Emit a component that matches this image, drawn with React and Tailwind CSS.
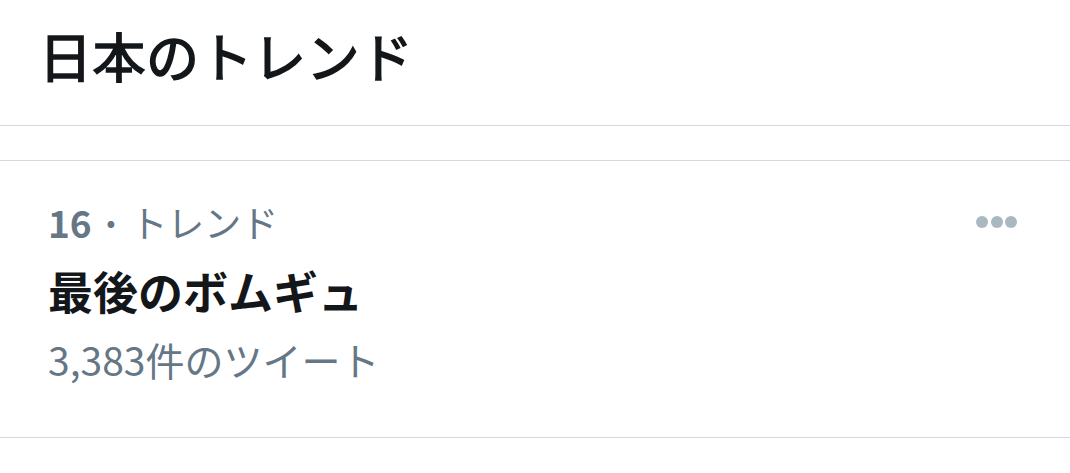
const font = { fontFamily: '"Noto Sans CJK JP", "Noto Sans", sans-serif' };

const MoreDots = () => (
  <div className="flex items-center gap-[2.5px]">
    <span className="block w-[12px] h-[12px] rounded-full bg-[#aab8c2]" />
    <span className="block w-[12px] h-[12px] rounded-full bg-[#aab8c2]" />
    <span className="block w-[12px] h-[12px] rounded-full bg-[#aab8c2]" />
  </div>
);

export default function App() {
  return (
    <div className="w-[1070px] h-[473px] bg-white overflow-hidden" style={font}>
      <div className="h-[126px] flex items-start pt-[27px] pl-[39px] border-b border-[#cfd9de]">
        <h1 className="text-[53px] leading-[56px] font-normal text-[#14171a] tracking-[0.5px] [-webkit-text-stroke:1.6px_#14171a]">日本のトレンド</h1>
      </div>
      <div className="h-[35px] border-b border-[#cfd9de]" />
      <div className="pl-[48px] pr-[53px] pt-[39px] pb-[56px] border-b border-[#cfd9de]">
        <div className="flex items-center justify-between h-[44px]">
          <div className="text-[37px] leading-[44px] text-[#657786]">
            <span className="font-bold">16</span>
            <span className="font-bold"> · </span>
            <span>トレンド</span>
          </div>
          <MoreDots />
        </div>
        <div className="mt-[22px] text-[45px] leading-[50px] font-bold text-[#14171a]">最後のボムギュ</div>
        <div className="mt-[21px] text-[39px] leading-[44px] text-[#657786]">3,383件のツイート</div>
      </div>
    </div>
  );
}
